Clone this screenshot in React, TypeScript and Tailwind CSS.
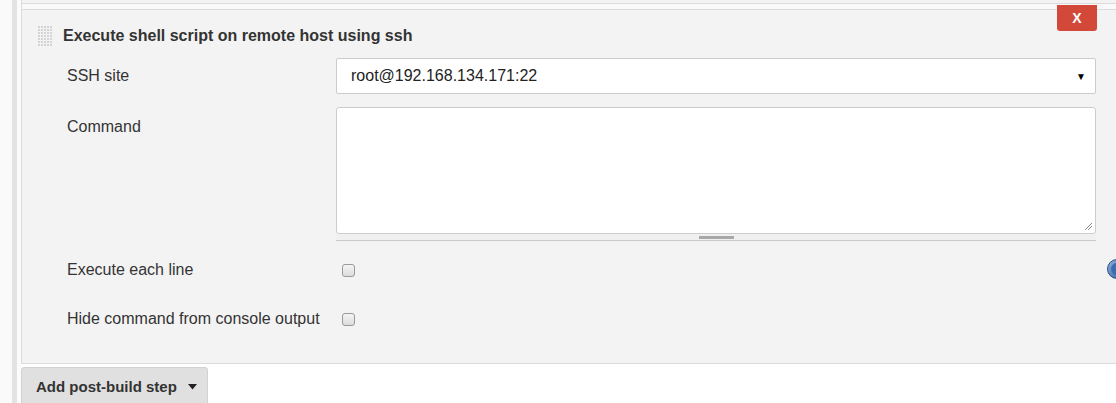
import { useState } from "react";

const font = { fontFamily: '"Liberation Sans", Arial, Helvetica, sans-serif' };

/* grid of dots used as the drag handle */
const DragHandle = () => (
  <svg width="16" height="21" viewBox="0 0 16 21" className="shrink-0">
    {Array.from({ length: 7 }).map((_, r) =>
      Array.from({ length: 5 }).map((_, c) => (
        <rect
          key={`${r}-${c}`}
          x={c * 3 + 1}
          y={r * 3 + 1}
          width="2"
          height="2"
          fill="#d4d4d4"
        />
      ))
    )}
  </svg>
);

const Caret = () => (
  <svg width="9" height="6" viewBox="0 0 9 6">
    <path d="M0 0 L9 0 L4.5 5.5 Z" fill="#222" />
  </svg>
);

const Checkbox = () => {
  const [checked, setChecked] = useState(false);
  return (
    <button
      onClick={() => setChecked(!checked)}
      className="w-[13px] h-[13px] rounded-[3px] border border-[#9a9a9a] bg-gradient-to-b from-[#f4f4f4] to-[#dcdcdc] flex items-center justify-center"
    >
      {checked && <span className="text-[10px] leading-none text-[#333]">✓</span>}
    </button>
  );
};

export default function App() {
  return (
    <div className="w-[1116px] h-[403px] overflow-hidden bg-white flex text-[#333]" style={font}>
      {/* left gutter */}
      <div className="w-[12px] bg-[#fafafa]" />
      <div className="w-[5px] bg-[#e3e3e3]" />
      <div className="w-[4px] bg-[#fbfbfb]" />

      <div className="flex-1 flex flex-col">
        {/* bottom of the previous step */}
        <div className="h-[3px] shrink-0 bg-[#f3f3f3] border-l border-[#dcdcdc]" />
        <div className="h-[6px] shrink-0 bg-[#f9f9f9] border-t border-l border-[#dcdcdc]" />

        {/* build step panel */}
        <div className="relative shrink-0 bg-[#f3f3f3] border-t border-l border-b border-[#dcdcdc] h-[355px]">
          <button className="absolute right-[19px] top-[-5px] w-[40px] h-[26px] rounded-b-[3px] bg-[#d24939] text-white font-bold text-[14px] flex items-center justify-center">
            X
          </button>

          <div className="flex items-center gap-[10px] pl-[15px] pt-[15px]">
            <DragHandle />
            <h3 className="font-bold text-[16px] leading-[20px] text-[#333]">
              Execute shell script on remote host using ssh
            </h3>
          </div>

          <div className="flex items-center mt-[12px]">
            <div className="w-[314px] pl-[45px] text-[16px]">SSH site</div>
            <div className="w-[760px] h-[36px] bg-white border border-[#ccc] rounded-[2px] flex items-center justify-between pl-[14px] pr-[9px] text-[16px] text-[#222]">
              <span>root@192.168.134.171:22</span>
              <span className="text-[10px] text-black">▼</span>
            </div>
          </div>

          <div className="flex mt-[13px]">
            <div className="w-[314px] pl-[45px] text-[16px] pt-[8px]">Command</div>
            <div className="w-[760px] flex flex-col">
              <div className="relative h-[127px] bg-white border border-[#ccc] rounded-[3px]">
                <svg width="10" height="10" viewBox="0 0 10 10" className="absolute right-[2px] bottom-[2px]">
                  <path d="M9 2 L2 9 M9 5 L5 9" stroke="#888" strokeWidth="1" />
                </svg>
              </div>
              <div className="h-[7px] bg-[#f0f0f0] border-b border-[#c8c8c8] flex justify-center items-end">
                <div className="w-[35px] h-[3px] bg-[#a8a8a8] mb-[1px]" />
              </div>
            </div>
          </div>

          <div className="relative flex items-center mt-[21px] h-[16px]">
            <div className="w-[320px] pl-[45px] text-[16px]">Execute each line</div>
            <Checkbox />
            <div className="absolute left-[1085px] top-[-3px] w-[20px] h-[20px] rounded-full bg-gradient-to-br from-[#8fb1dd] to-[#2f5d9a] border border-[#2a4f85] flex items-center justify-center">
              <div className="w-[12px] h-[12px] rounded-full bg-[#3d6cae]" />
            </div>
          </div>

          <div className="flex items-center mt-[33px] h-[16px]">
            <div className="w-[320px] pl-[45px] text-[16px]">Hide command from console output</div>
            <Checkbox />
          </div>
        </div>

        {/* add step button */}
        <div className="pt-[3px]">
          <button className="h-[40px] w-[187px] bg-[#e0e0e0] border border-[#d2d2d2] rounded-[3px] flex items-center gap-[11px] pl-[14px] font-bold text-[15px] text-[#333]">
            Add post-build step
            <Caret />
          </button>
        </div>
      </div>
    </div>
  );
}
